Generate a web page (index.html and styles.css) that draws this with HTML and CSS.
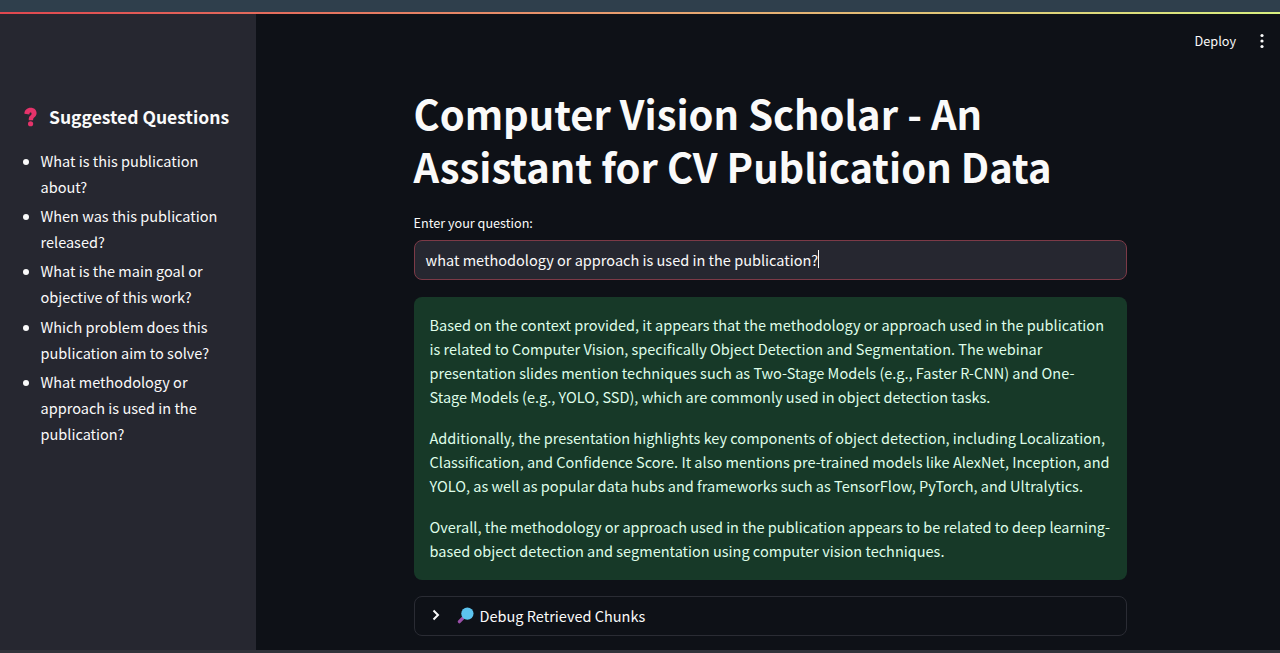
FILE: index.html
```html
<!DOCTYPE html>
<html lang="en">
<head>
<meta charset="utf-8">
<title>Computer Vision Scholar</title>
<link rel="stylesheet" href="styles.css">
</head>
<body>
<div class="top-strip"></div>
<div class="rainbow"></div>
<div class="app">
  <aside class="sidebar">
    <h2 class="side-title">
      <svg class="q-icon" viewBox="0 0 16 24" aria-hidden="true"><path d="M.5 8C.5 3.500 3.800.5 8.200.5c4.400 0 7.300 2.700 7.300 6.500 0 2.800-1.500 4.300-3 5.600-1.100 1-1.300 1.600-1.300 3.400H5.800c0-3 .5-4.300 2.200-5.700.9-.8 1.300-1.400 1.300-2.200 0-.9-.4-1.500-1.200-1.500-1 0-1.400.8-1.400 2.400z" fill="#e5336a"/><circle cx="8.100" cy="20.300" r="3.200" fill="#e5336a"/></svg>
      <span>Suggested Questions</span>
    </h2>
    <ul class="side-list">
      <li>What is this publication about?</li>
      <li>When was this publication released?</li>
      <li>What is the main goal or objective of this work?</li>
      <li>Which problem does this publication aim to solve?</li>
      <li>What methodology or approach is used in the publication?</li>
    </ul>
  </aside>
  <main class="main">
    <header class="toolbar">
      <span class="deploy">Deploy</span>
      <svg class="kebab" viewBox="0 0 4 16" aria-hidden="true"><circle cx="2" cy="2.500" r="1.600"/><circle cx="2" cy="8" r="1.600"/><circle cx="2" cy="13.500" r="1.600"/></svg>
    </header>
    <div class="content">
      <h1 class="title">Computer Vision Scholar - An Assistant for CV Publication Data</h1>
      <label class="field-label">Enter your question:</label>
      <div class="input">what methodology or approach is used in the publication?<span class="caret"></span></div>
      <div class="answer">
        <p>Based on the context provided, it appears that the methodology or approach used in the publication is related to Computer Vision, specifically Object Detection and Segmentation. The webinar presentation slides mention techniques such as Two-Stage Models (e.g., Faster R-CNN) and One-Stage Models (e.g., YOLO, SSD), which are commonly used in object detection tasks.</p>
        <p>Additionally, the presentation highlights key components of object detection, including Localization, Classification, and Confidence Score. It also mentions pre-trained models like AlexNet, Inception, and YOLO, as well as popular data hubs and frameworks such as TensorFlow, PyTorch, and Ultralytics.</p>
        <p>Overall, the methodology or approach used in the publication appears to be related to deep learning-based object detection and segmentation using computer vision techniques.</p>
      </div>
      <div class="expander">
        <svg class="chev" viewBox="0 0 10 12" aria-hidden="true"><path d="M2.500 1.500 7 6l-4.500 4.500" fill="none" stroke="#fafafa" stroke-width="2"/></svg>
        <svg class="lens" viewBox="0 0 18 18" aria-hidden="true"><path d="M7 11 2.500 15.500" stroke="#9a4fa8" stroke-width="3.500" stroke-linecap="round"/><circle cx="11" cy="7" r="6.500" fill="#5cc3ee"/></svg>
        <span>Debug Retrieved Chunks</span>
      </div>
    </div>
  </main>
</div>
<div class="bottom-strip"></div>
</body>
</html>
```
FILE: styles.css
```css
* { box-sizing: border-box; }
html, body { margin: 0; height: 653px; overflow: hidden; }
body {
  display: flex;
  flex-direction: column;
  background: #0e1117;
  color: #fafafa;
  font-family: "Noto Sans CJK SC", "Noto Sans", sans-serif;
}
.top-strip { height: 12px; background: #2f3f4c; flex: none; }
.rainbow {
  height: 2px;
  flex: none;
  background: linear-gradient(90deg, #e0474f, #e8a070 50%, #d8f080);
}
.app { flex: 1; display: flex; min-height: 0; }
.bottom-strip { height: 3px; flex: none; background: #31333a; }
.sidebar {
  width: 256px;
  flex: none;
  background: #262730;
  padding: 88px 20px 0 24px;
}
.side-title {
  margin: 0;
  display: flex;
  align-items: center;
  gap: 12px;
  font-size: 17.500px;
  line-height: 30px;
  font-weight: 600;
  white-space: nowrap;
}
.q-icon { width: 13px; height: 20px; flex: none; }
.side-list {
  margin: 16px 0 0 -3px;
  padding: 0 0 0 19.500px;
  font-size: 14.520px;
  line-height: 26px;
}
.side-list li { margin-bottom: 3.200px; }
.side-list li::marker { font-size: 15px; }
.main { flex: 1; min-width: 0; }
.toolbar {
  height: 54px;
  display: flex;
  justify-content: flex-end;
  align-items: center;
  padding: 0 16px 0 0;
  font-size: 12.700px;
}
.deploy { margin-right: 24px; padding-bottom: 2px; }
.kebab { width: 4px; height: 16px; fill: #fafafa; }
.content { width: 713.500px; margin-left: 157.500px; }
.title {
  margin: 18px 0 0;
  font-size: 39.900px;
  line-height: 53px;
  font-weight: 700;
}
.field-label { display: block; margin-top: 21px; font-size: 12.650px; line-height: 20px; }
.input {
  margin-top: 6.500px;
  height: 40px;
  padding: 0 11px 1px;
  display: flex;
  align-items: center;
  background: #262730;
  border: 1px solid #7c3a47;
  border-radius: 8px;
  font-size: 14.520px;
}
.caret { width: 1px; height: 18px; background: #fafafa; }
.answer {
  margin-top: 17px;
  height: 283px;
  padding: 16px;
  background: #173928;
  color: #dffde9;
  border-radius: 8px;
  font-size: 14.520px;
  line-height: 24px;
}
.answer p { margin: 0 0 17px; }
.answer p:last-child { margin-bottom: 0; }
.expander {
  margin-top: 16.500px;
  height: 40px;
  padding: 0 16px 2px;
  display: flex;
  align-items: center;
  border: 1px solid #2a2c34;
  border-radius: 8px;
  font-size: 14.520px;
}
.chev { width: 10px; height: 12px; margin-right: 16px; flex: none; }
.lens { width: 17px; height: 17px; margin-right: 6px; flex: none; }
```
